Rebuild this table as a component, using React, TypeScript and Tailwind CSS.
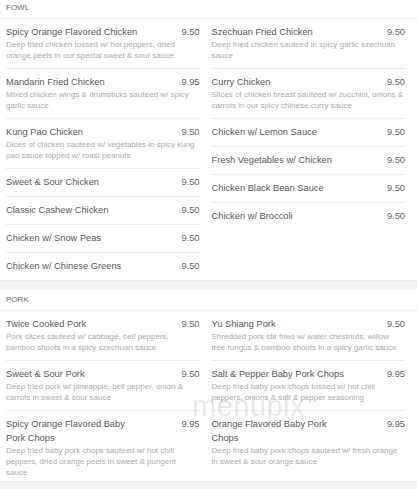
import React from "react";

type Item = { name: string; price: string; desc?: string };

const fowlLeft: Item[] = [
  { name: "Spicy Orange Flavored Chicken", price: "9.50", desc: "Deep fried chicken tossed w/ hot peppers, dried orange peels in our special sweet & sour sauce" },
  { name: "Mandarin Fried Chicken", price: "9.95", desc: "Mixed chicken wings & drumsticks sauteed w/ spicy garlic sauce" },
  { name: "Kung Pao Chicken", price: "9.50", desc: "Dices of chicken sauteed w/ vegetables in spicy kung pao sauce topped w/ roast peanuts" },
  { name: "Sweet & Sour Chicken", price: "9.50" },
  { name: "Classic Cashew Chicken", price: "9.50" },
  { name: "Chicken w/ Snow Peas", price: "9.50" },
  { name: "Chicken w/ Chinese Greens", price: "9.50" },
];

const fowlRight: Item[] = [
  { name: "Szechuan Fried Chicken", price: "9.50", desc: "Deep fried chicken sauteed in spicy garlic szechuan sauce" },
  { name: "Curry Chicken", price: "9.50", desc: "Slices of chicken breast sauteed w/ zucchini, onions & carrots in our spicy chinese curry sauce" },
  { name: "Chicken w/ Lemon Sauce", price: "9.50" },
  { name: "Fresh Vegetables w/ Chicken", price: "9.50" },
  { name: "Chicken Black Bean Sauce", price: "9.50" },
  { name: "Chicken w/ Broccoli", price: "9.50" },
];

const porkLeft: Item[] = [
  { name: "Twice Cooked Pork", price: "9.50", desc: "Pork slices sauteed w/ cabbage, bell peppers, bamboo shoots in a spicy szechuan sauce" },
  { name: "Sweet & Sour Pork", price: "9.50", desc: "Deep fried pork w/ pineapple, bell pepper, onion & carrots in sweet & sour sauce" },
  { name: "Spicy Orange Flavored Baby Pork Chops", price: "9.95", desc: "Deep fried baby pork chops sauteed w/ hot chili peppers, dried orange peels in sweet & pungent sauce" },
];

const porkRight: Item[] = [
  { name: "Yu Shiang Pork", price: "9.50", desc: "Shredded pork stir fried w/ water chestnuts, willow tree fungus & bamboo shoots in a spicy garlic sauce" },
  { name: "Salt & Pepper Baby Pork Chops", price: "9.95", desc: "Deep fried baby pork chops tossed w/ hot chili peppers, onions & salt & pepper seasoning" },
  { name: "Orange Flavored Baby Pork Chops", price: "9.95", desc: "Deep fried baby pork chops sauteed w/ fresh orange in sweet & sour orange sauce" },
];

function MenuItem({ item, last, tight }: { item: Item; last: boolean; tight: boolean }) {
  const cls = last
    ? tight
      ? "pt-[6px] pb-[3px]"
      : "pt-[6px] pb-[7px]"
    : "pt-[6px] pb-[7px] border-b border-[#ececec]";
  return (
    <div className={cls}>
      <div className="flex items-start">
        <div className="w-[70%] text-[9.3px] leading-[14px] text-[#585858]">{item.name}</div>
        <div className="flex-1 text-right text-[9.3px] leading-[14px] text-[#666]">{item.price}</div>
      </div>
      {item.desc && (
        <div className="pr-[1px] text-[8px] leading-[11px] text-[#ababab]">{item.desc}</div>
      )}
    </div>
  );
}

function Column({ items, tight }: { items: Item[]; tight: boolean }) {
  return (
    <div className="flex flex-col">
      {items.map((it, i) => (
        <MenuItem key={it.name} item={it} last={i === items.length - 1} tight={tight} />
      ))}
    </div>
  );
}

function Section({
  title,
  left,
  right,
  headerClass,
  tight,
}: {
  title: string;
  left: Item[];
  right: Item[];
  headerClass: string;
  tight: boolean;
}) {
  return (
    <div className="bg-white border-b border-[#ececec]">
      <div className={`flex items-center pl-[6px] border-b border-[#ececec] text-[8px] text-[#6a6a6a] ${headerClass}`}>{title}</div>
      <div className="grid grid-cols-2 gap-x-[12px] pl-[6px] pr-[12px]">
        <Column items={left} tight={tight} />
        <Column items={right} tight={tight} />
      </div>
    </div>
  );
}

export default function App() {
  return (
    <div className="relative w-[417px] h-[489px] overflow-hidden bg-[#f4f4f4] font-['Liberation_Sans',Arial,sans-serif]">
      <Section title="FOWL" left={fowlLeft} right={fowlRight} headerClass="h-[19px] pb-[3px]" tight={false} />
      <div className="h-[9px]" />
      <Section title="PORK" left={porkLeft} right={porkRight} headerClass="h-[21px]" tight={true} />
      <div className="pointer-events-none absolute left-[192px] top-[390px] text-[29px] leading-[32px] font-light text-[rgba(150,150,150,0.22)] tracking-[0.5px]">
        menupix
      </div>
    </div>
  );
}
